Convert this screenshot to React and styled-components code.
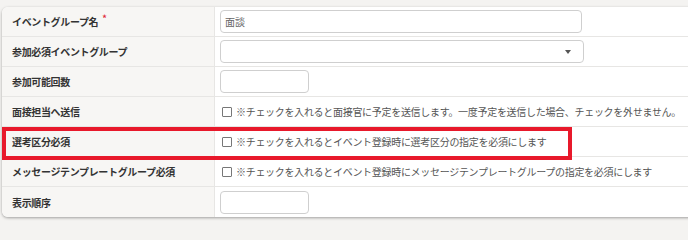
import React from "react";
import styled, { createGlobalStyle } from "styled-components";

const Global = createGlobalStyle`
  html, body { margin: 0; padding: 0; background: #f4f3f1; overflow: hidden; }
  body { font-family: "Noto Sans CJK JP", "Noto Sans", sans-serif; }
`;

const Page = styled.div`
  padding: 7px 0 0 2px;
  height: 233px;
`;

const Card = styled.div`
  position: relative;
  width: 720px;
  background: #fff;
  border-radius: 6px;
  box-shadow: 0 1px 3px rgba(0, 0, 0, 0.35);
  overflow: hidden;
`;

const Row = styled.div`
  display: grid;
  grid-template-columns: 213px 1fr;
  height: 30px;
  border-bottom: ${(p) => (p.$last ? "none" : "1px solid #e7e6e4")};
  box-sizing: border-box;
`;

const Label = styled.div`
  display: flex;
  align-items: center;
  padding-left: 10px;
  background: #f7f6f4;
  border-right: 1px solid #e7e6e4;
  font-size: 10px;
  font-weight: 700;
  color: #333;
  letter-spacing: -0.35px;
`;

const Req = styled.span`
  color: #e02b3a;
  font-size: 9px;
  margin-left: 4px;
  position: relative;
  top: -3px;
`;

const Value = styled.div`
  display: flex;
  align-items: center;
  padding-left: 5px;
`;

const Input = styled.div`
  box-sizing: border-box;
  width: ${(p) => p.$w}px;
  height: 23px;
  border: 1px solid #cfcfcf;
  border-radius: 4px;
  background: #fff;
  display: flex;
  align-items: center;
  justify-content: space-between;
  padding: 0 10px 0 4px;
  font-size: 10px;
  color: #666;
`;

const Arrow = styled.span`
  width: 0;
  height: 0;
  border-left: 3.5px solid transparent;
  border-right: 3.5px solid transparent;
  border-top: 4px solid #555;
  margin-right: 2px;
`;

const Check = styled.label`
  display: flex;
  align-items: center;
  gap: 4px;
  font-size: 10px;
  color: #555;
  letter-spacing: -0.3px;
  padding-left: 2px;
`;

const Box = styled.span`
  width: 8px;
  height: 8px;
  border: 1px solid #777;
  border-radius: 1px;
  background: #fff;
  flex-shrink: 0;
`;

const Highlight = styled.div`
  position: absolute;
  left: 0;
  top: 120px;
  width: 570px;
  height: 33px;
  box-sizing: border-box;
  border: 4px solid #e8192b;
  pointer-events: none;
`;

const rows = [
  { label: "イベントグループ名", req: true, kind: "input", w: 362, text: "面談" },
  { label: "参加必須イベントグループ", kind: "select", w: 364 },
  { label: "参加可能回数", kind: "input", w: 89 },
  {
    label: "面接担当へ送信",
    kind: "check",
    text: "※チェックを入れると面接官に予定を送信します。一度予定を送信した場合、チェックを外せません。",
  },
  {
    label: "選考区分必須",
    kind: "check",
    text: "※チェックを入れるとイベント登録時に選考区分の指定を必須にします",
  },
  {
    label: "メッセージテンプレートグループ必須",
    kind: "check",
    text: "※チェックを入れるとイベント登録時にメッセージテンプレートグループの指定を必須にします",
  },
  { label: "表示順序", kind: "input", w: 89 },
];

export default function App() {
  return (
    <>
      <Global />
      <Page>
        <Card>
          {rows.map((r, i) => (
            <Row key={i} $last={i === rows.length - 1}>
              <Label>
                {r.label}
                {r.req && <Req>*</Req>}
              </Label>
              <Value>
                {r.kind === "input" && <Input $w={r.w}>{r.text}</Input>}
                {r.kind === "select" && (
                  <Input $w={r.w}>
                    <span />
                    <Arrow />
                  </Input>
                )}
                {r.kind === "check" && (
                  <Check>
                    <Box />
                    {r.text}
                  </Check>
                )}
              </Value>
            </Row>
          ))}
          <Highlight />
        </Card>
      </Page>
    </>
  );
}
